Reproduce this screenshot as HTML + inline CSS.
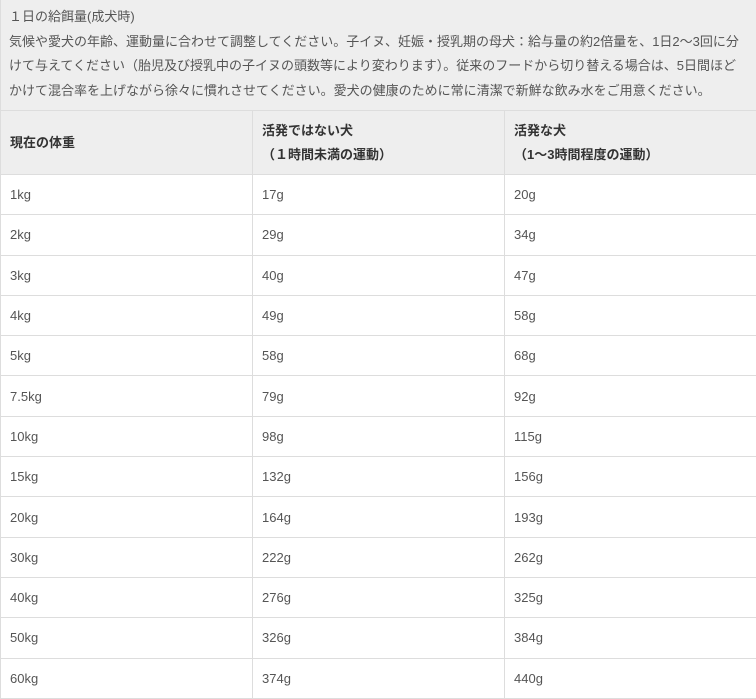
<!DOCTYPE html>
<html><head><meta charset="utf-8"><style>
*{margin:0;padding:0;box-sizing:border-box}
body{width:756px;height:690px;overflow:hidden;background:#fff;font-family:"Liberation Sans","Noto Sans CJK JP",sans-serif;color:#555;font-size:13px}
.cap{background:#eee;height:110px;padding:5px 0 0 8px;line-height:24.5px;font-size:13px;color:#555;letter-spacing:0;border-left:1px solid #ddd;white-space:nowrap;overflow:hidden}
table{border-collapse:collapse;width:757px;table-layout:fixed}
td,th{border:1px solid #ddd;text-align:left;padding:0 0 0 9px;font-size:13px;vertical-align:middle}
th{background:#eee;color:#333;font-weight:bold;height:64px;line-height:24px}
td{height:40.3px;color:#555}
col.a{width:252px}col.b{width:252px}
</style></head><body>
<div class="cap">１日の給餌量(成犬時)<br>気候や愛犬の年齢、運動量に合わせて調整してください。子イヌ、妊娠・授乳期の母犬：給与量の約2倍量を、1日2〜3回に分<br>けて与えてください（胎児及び授乳中の子イヌの頭数等により変わります）。従来のフードから切り替える場合は、5日間ほど<br>かけて混合率を上げながら徐々に慣れさせてください。愛犬の健康のために常に清潔で新鮮な飲み水をご用意ください。</div>
<table><colgroup><col class="a"><col class="b"><col></colgroup>
<tr><th>現在の体重</th><th>活発ではない犬<br>（１時間未満の運動）</th><th>活発な犬<br>（1〜3時間程度の運動）</th></tr>
<tr><td>1kg</td><td>17g</td><td>20g</td></tr>
<tr><td>2kg</td><td>29g</td><td>34g</td></tr>
<tr><td>3kg</td><td>40g</td><td>47g</td></tr>
<tr><td>4kg</td><td>49g</td><td>58g</td></tr>
<tr><td>5kg</td><td>58g</td><td>68g</td></tr>
<tr><td>7.5kg</td><td>79g</td><td>92g</td></tr>
<tr><td>10kg</td><td>98g</td><td>115g</td></tr>
<tr><td>15kg</td><td>132g</td><td>156g</td></tr>
<tr><td>20kg</td><td>164g</td><td>193g</td></tr>
<tr><td>30kg</td><td>222g</td><td>262g</td></tr>
<tr><td>40kg</td><td>276g</td><td>325g</td></tr>
<tr><td>50kg</td><td>326g</td><td>384g</td></tr>
<tr><td>60kg</td><td>374g</td><td>440g</td></tr>
</table>
</body></html>
